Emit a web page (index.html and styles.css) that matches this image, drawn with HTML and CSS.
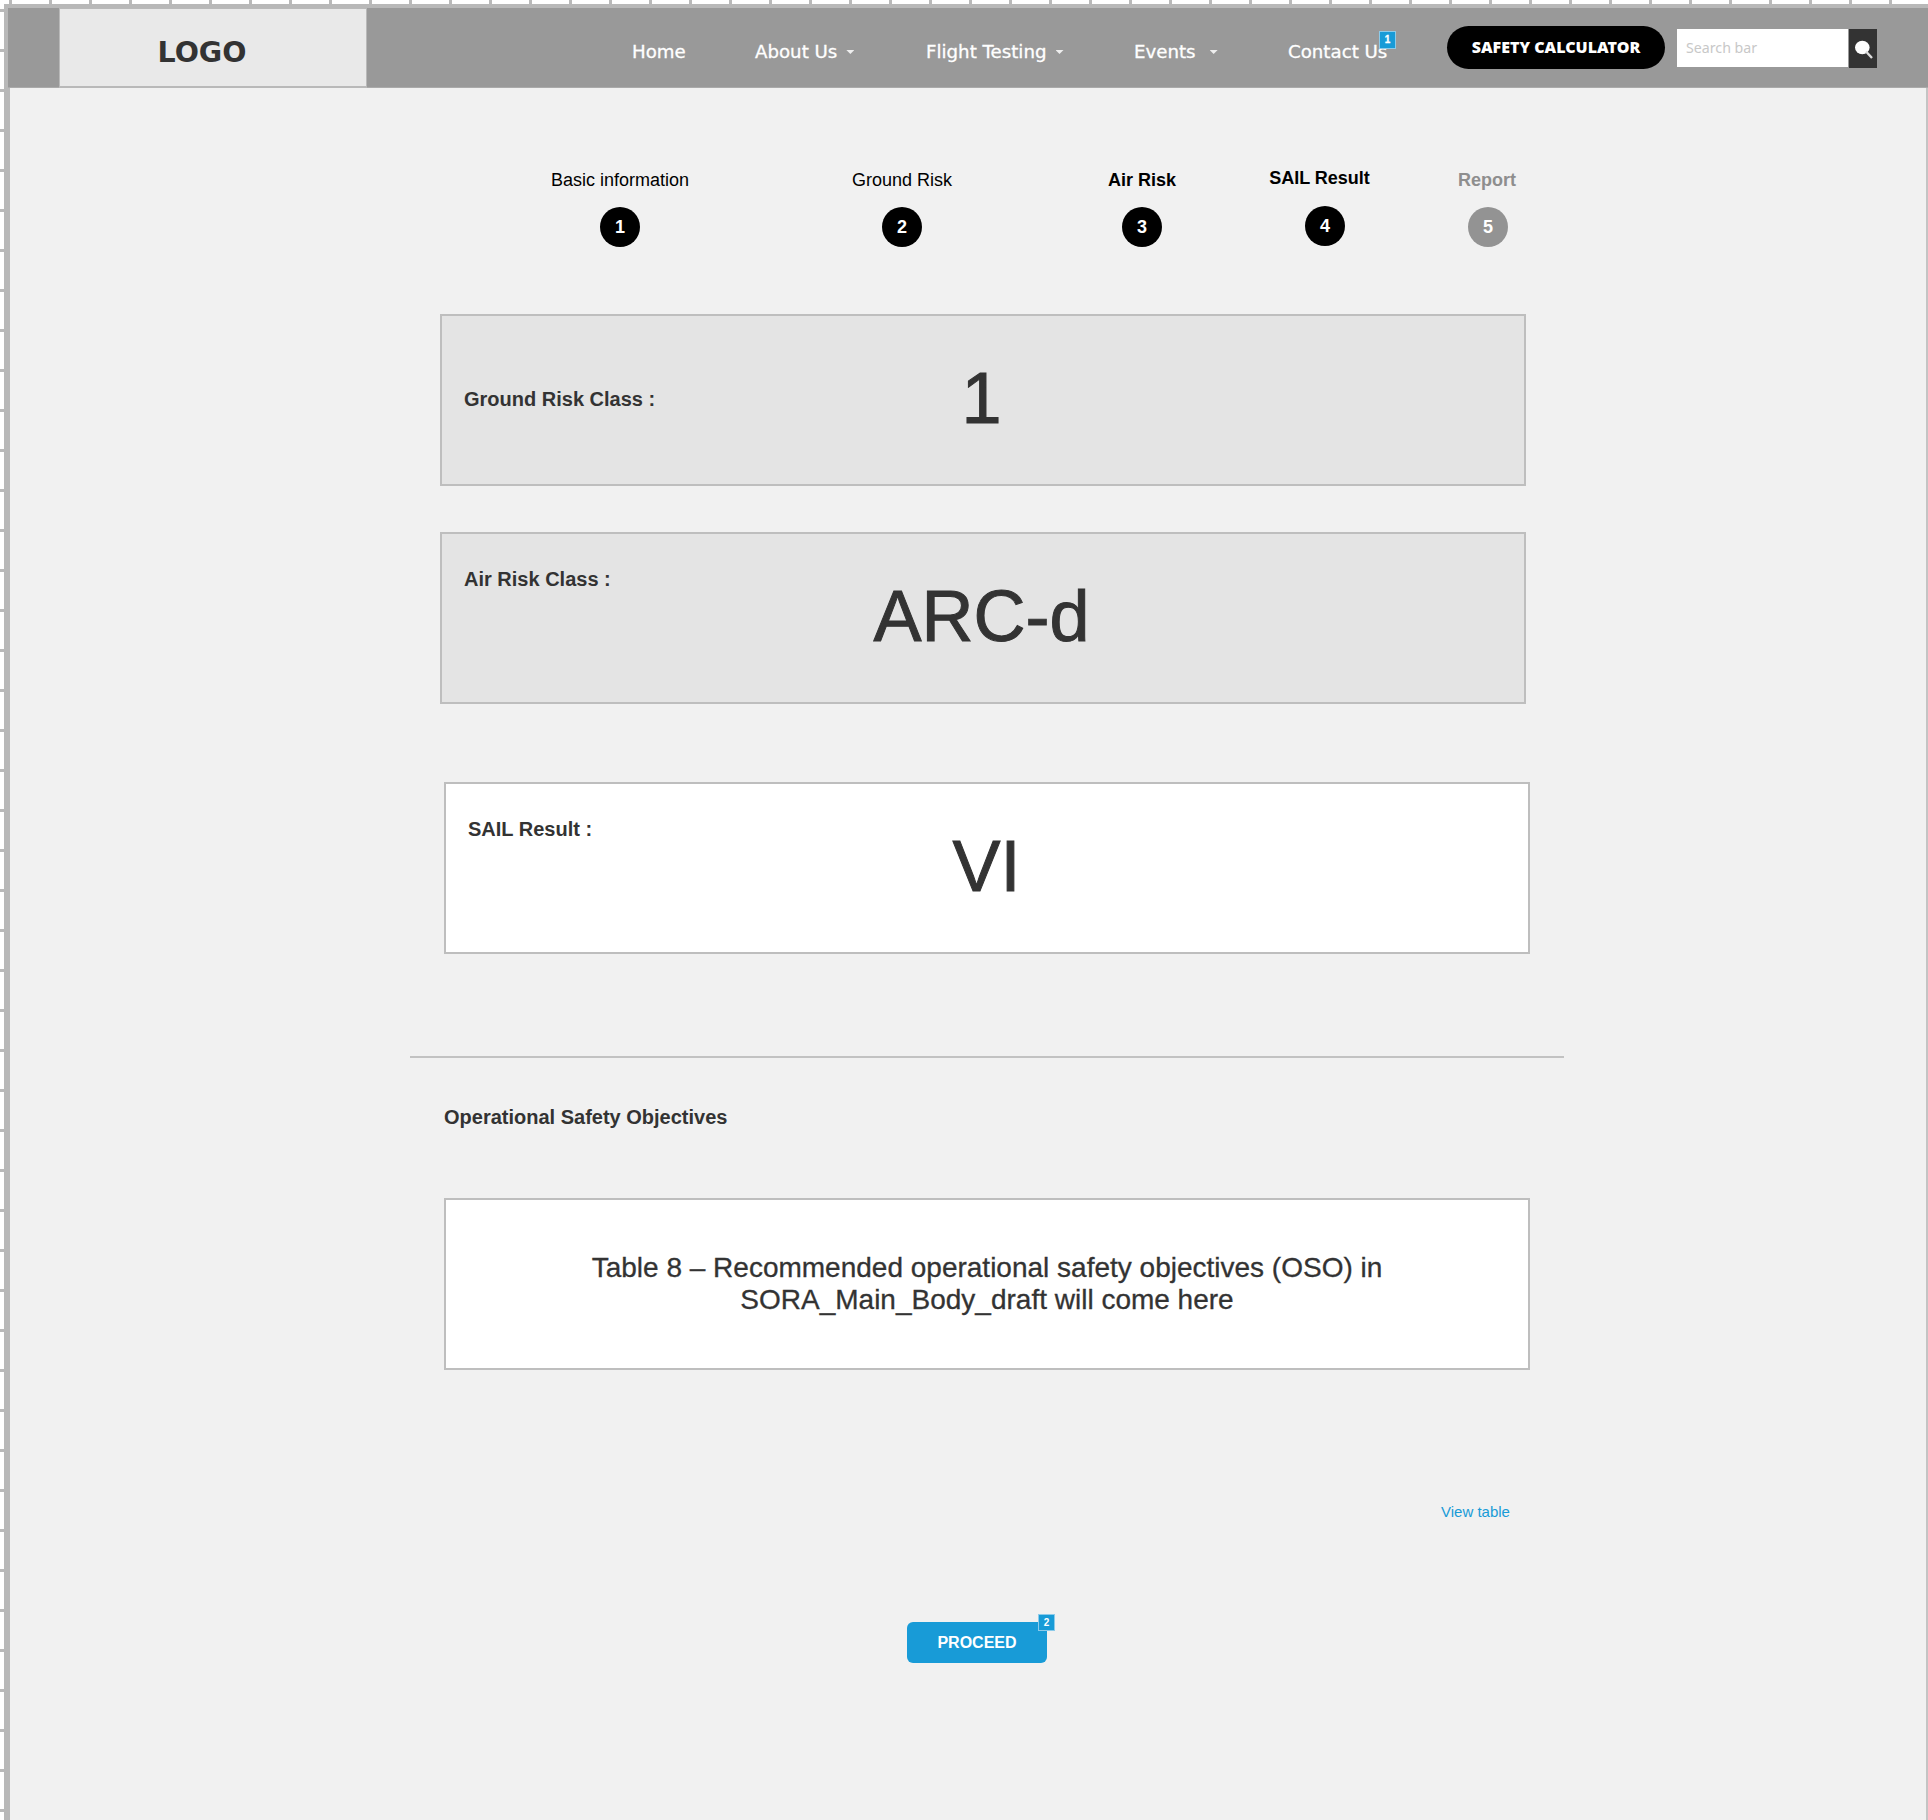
FILE: index.html
```html
<!DOCTYPE html>
<html lang="en">
<head>
<meta charset="utf-8">
<title>SAIL Result</title>
<link rel="stylesheet" href="styles.css">
</head>
<body>
<div class="frame">
  <header class="topbar">
    <div class="logo">LOGO</div>
    <nav class="nav">
      <a class="nav-item"><span>Home</span></a>
      <a class="nav-item"><span>About Us</span><i class="caret"></i></a>
      <a class="nav-item"><span>Flight Testing</span><i class="caret"></i></a>
      <a class="nav-item nav-item-events"><span>Events</span><i class="caret"></i></a>
      <a class="nav-item"><span>Contact Us</span><b class="note note-nav">1</b></a>
    </nav>
    <a class="pill"><span>SAFETY CALCULATOR</span></a>
    <div class="search">
      <div class="search-field"><span>Search bar</span></div>
      <div class="search-button">
        <svg class="search-icon" viewBox="0 0 28 39" width="28" height="39"><ellipse cx="13.300" cy="18.500" rx="7.300" ry="6.800" fill="#fff"/><path d="M17 22.500L23 29" stroke="#ddd" stroke-width="2.400"/></svg>
      </div>
    </div>
  </header>
  <main class="content">
    <ol class="steps">
      <li class="step"><span class="step-label">Basic information</span><span class="step-dot">1</span></li>
      <li class="step"><span class="step-label">Ground Risk</span><span class="step-dot">2</span></li>
      <li class="step step-bold"><span class="step-label">Air Risk</span><span class="step-dot">3</span></li>
      <li class="step step-bold step-current"><span class="step-label">SAIL Result</span><span class="step-dot">4</span></li>
      <li class="step step-bold step-todo"><span class="step-label">Report</span><span class="step-dot">5</span></li>
    </ol>
    <section class="card card-ground"><h2 class="card-title">Ground Risk Class :</h2><p class="card-value">1</p></section>
    <section class="card card-air"><h2 class="card-title">Air Risk Class :</h2><p class="card-value">ARC-d</p></section>
    <section class="card card-sail"><h2 class="card-title">SAIL Result :</h2><p class="card-value">VI</p></section>
    <hr class="divider">
    <h2 class="section-title">Operational Safety Objectives</h2>
    <section class="card card-table"><p class="table-text">Table 8 – Recommended operational safety objectives (OSO) in<br>SORA_Main_Body_draft will come here</p></section>
    <a class="view-link">View table</a>
    <div class="actions"><button class="proceed">PROCEED<b class="note note-proceed">2</b></button></div>
  </main>
</div>
</body>
</html>
```
FILE: styles.css
```css
* { box-sizing: border-box; }
body {
  margin: 0;
  min-height: 1820px;
  padding: 4px 0 0 4px;
  font-family: "Liberation Sans", Arial, sans-serif;
  color: #333;
  background-color: #fff;
  background-image:
    linear-gradient(to right, #b9b9b9 3px, transparent 3px),
    linear-gradient(to bottom, #b9b9b9 3px, transparent 3px);
  background-size: 40px 40px;
  background-position: 9px 0, 0 9px;
}
h2, p, ol { margin: 0; padding: 0; font-weight: normal; }

/* Page frame */
.frame {
  height: 1816px;
  border-left: 4px solid #b8b8b8;
  border-top: 4px solid #b8b8b8;
  background: #f1f1f1;
}

/* Top bar */
.topbar {
  display: flex;
  height: 80px;
  background: #999;
  border-bottom: 1px solid #aaa;
  padding-left: 51px;
  font-family: "DejaVu Sans", sans-serif;
}
.logo {
  width: 308px;
  height: 80px;
  border: 1px solid #b9b9b9;
  border-bottom-width: 2px;
  background: #e9e9e9;
  font-size: 28.500px;
  font-weight: 700;
  line-height: 87px;
  text-align: center;
  padding-right: 22px;
}
.nav {
  display: grid;
  grid-template-columns: 123px 171px 208px 154px 158px;
  margin-left: 265px;
  height: 79px;
}
.nav-item {
  position: relative;
  display: flex;
  color: #fff;
  font-size: 18.200px;
  line-height: 88px;
  white-space: nowrap;
  -webkit-text-stroke: 0.3px #fff;
}
.caret {
  width: 8px;
  height: 4px;
  margin: 42px 0 0 9px;
  background: #eee;
  clip-path: polygon(0 0, 100% 0, 50% 100%);
}
.nav-item-events .caret { margin-left: 14px; }
.note {
  position: absolute;
  width: 17px;
  height: 17px;
  border: 1px solid #8ccbea;
  background: #189bd7;
  color: #fff;
  font: 700 10px/15px "Liberation Sans", Arial, sans-serif;
  text-align: center;
}
.note-nav { left: 91px; top: 23px; height: 18px; }
.pill {
  width: 218px;
  height: 43px;
  margin: 18px 0 0 1px;
  border-radius: 22px;
  background: #000;
  color: #fff;
  font-family: "Noto Sans", sans-serif;
  font-size: 16px;
  font-weight: 900;
  line-height: 42px;
  text-align: center;
}
.search {
  display: flex;
  gap: 1px;
  height: 38px;
  margin: 21px 0 0 12px;
  font-family: "Noto Sans", sans-serif;
}
.search-field {
  width: 171px;
  padding-left: 9px;
  background: #fff;
  color: #c8c8c8;
  font-size: 14.200px;
  line-height: 38px;
}
.search-button { width: 28px; height: 39px; background: #333; }
.search-icon { display: block; }

/* Page body */
.content {
  display: flex;
  flex-direction: column;
  height: 1732px;
  border-left: 2px solid #b8b8b8;
  border-right: 2px solid #c4c4c4;
}

/* Progress steps */
.steps {
  display: grid;
  grid-template-columns: 280px 284px 196px 170px 156px;
  margin: 82px 0 0 470px;
  height: 144px;
  list-style: none;
}
.step {
  display: flex;
  flex-direction: column;
  align-items: center;
  gap: 17px;
  color: #000;
  font-size: 18px;
  line-height: 20px;
}
.step-bold { font-weight: 700; }
.step-current { margin-top: -2px; }
.step-current .step-label { margin: 0 11px 1px 0; }
.step-todo { color: #8e8e8e; }
.step-todo .step-label { margin-right: 2px; }
.step-dot {
  width: 40px;
  height: 40px;
  border-radius: 50%;
  background: #000;
  color: #fff;
  font-weight: 700;
  line-height: 40px;
  text-align: center;
}
.step-todo .step-dot { background: #939393; }

/* Result cards */
.card {
  display: grid;
  grid-template-columns: 100%;
  width: 1086px;
  height: 172px;
  margin-left: 430px;
  border: 2px solid #bebebe;
  background: #e4e4e4;
}
.card-title, .card-value { grid-area: 1 / 1; }
.card-title {
  padding: 33px 0 0 22px;
  font-size: 20px;
  font-weight: 700;
  line-height: 24px;
}
.card-value {
  padding: 42px 3px 0 0;
  font-size: 72px;
  line-height: 80px;
  text-align: center;
  -webkit-text-stroke: 1px #333;
}
.card-ground .card-title { padding-top: 71px; }
.card-air { margin-top: 46px; }
.card-sail { margin: 78px 0 0 434px; background: #fff; }
.card-sail .card-value { padding-right: 1px; }

.divider {
  width: 1154px;
  height: 2px;
  margin: 102px 0 0 400px;
  border: 0;
  background: #c2c2c2;
}
.section-title {
  margin: 47px 0 0 434px;
  font-size: 20px;
  font-weight: 700;
  line-height: 24px;
}
.card-table { margin: 69px 0 0 434px; background: #fff; }
.table-text {
  padding-top: 52px;
  font-size: 28px;
  line-height: 32px;
  text-align: center;
  -webkit-text-stroke: 0.3px #333;
}
.view-link {
  margin: 132px 0 0 1431px;
  color: #189bd7;
  font-size: 15px;
  line-height: 20px;
}
.actions { margin: 100px 0 0 897px; }
.proceed {
  position: relative;
  display: block;
  width: 140px;
  height: 41px;
  padding: 0;
  border: 0;
  border-radius: 6px;
  background: #189bd7;
  color: #fff;
  font: 700 16px/40px "Liberation Sans", Arial, sans-serif;
}
.note-proceed { left: 131px; top: -8px; }
```
